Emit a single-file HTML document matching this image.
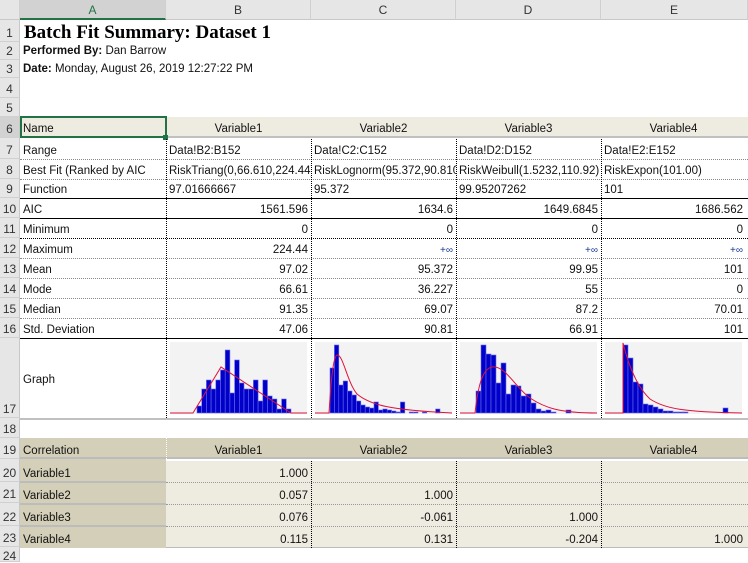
<!DOCTYPE html><html><head><style>
*{margin:0;padding:0;box-sizing:border-box}
body{width:748px;height:558px;overflow:hidden;background:#fff;font-family:"Liberation Sans",sans-serif;font-size:11.5px;color:#111;position:relative}
div{position:absolute}
.ch{top:0;height:20px;background:#e6e6e6;border-right:1px solid #d0d0d0;border-bottom:1px solid #c8c8c8;text-align:center;line-height:20px;font-size:12px;color:#333}
.rh{left:0;width:20px;background:#e6e6e6;border-bottom:1px solid #d0d0d0;border-right:1px solid #c8c8c8;text-align:center;font-size:12px;color:#333;display:flex;align-items:flex-end;justify-content:center;padding-bottom:1px}
.t{white-space:nowrap;overflow:hidden;padding:0 3px;display:flex;align-items:flex-end;padding-bottom:2px}
.r{justify-content:flex-end}
.m{justify-content:center}
.hl{height:0;border-top:1px dotted #888}
.vl{width:0;border-left:1px dotted #000}
.bl{height:0;border-top:1px solid #000}
</style></head><body>
<div class="ch" style="left:0;width:20px;background:#e6e6e6"></div>
<div class="ch" style="left:20px;width:146px;background:#d2d2d2;color:#217346;border-bottom:2px solid #217346">A</div>
<div class="ch" style="left:166px;width:145px">B</div>
<div class="ch" style="left:311px;width:145px">C</div>
<div class="ch" style="left:456px;width:145px">D</div>
<div class="ch" style="left:601px;width:147px">E</div>
<div class="rh" style="top:20px;height:22px">1</div>
<div class="rh" style="top:42px;height:18px">2</div>
<div class="rh" style="top:60px;height:18px">3</div>
<div class="rh" style="top:78px;height:20px">4</div>
<div class="rh" style="top:98px;height:19px">5</div>
<div class="rh" style="top:117px;height:21px;background:#d2d2d2">6</div>
<div class="rh" style="top:138px;height:21px">7</div>
<div class="rh" style="top:159px;height:20px">8</div>
<div class="rh" style="top:179px;height:19px">9</div>
<div class="rh" style="top:198px;height:20px">10</div>
<div class="rh" style="top:218px;height:20px">11</div>
<div class="rh" style="top:238px;height:20px">12</div>
<div class="rh" style="top:258px;height:20px">13</div>
<div class="rh" style="top:278px;height:20px">14</div>
<div class="rh" style="top:298px;height:20px">15</div>
<div class="rh" style="top:318px;height:20px">16</div>
<div class="rh" style="top:338px;height:80px">17</div>
<div class="rh" style="top:418px;height:20px">18</div>
<div class="rh" style="top:438px;height:21px">19</div>
<div class="rh" style="top:459px;height:23px">20</div>
<div class="rh" style="top:482px;height:21px">21</div>
<div class="rh" style="top:503px;height:23px">22</div>
<div class="rh" style="top:526px;height:21px">23</div>
<div class="rh" style="top:547px;height:15px;align-items:flex-start;padding-top:2px">24</div>

<div style="left:24px;top:21px;height:22px;line-height:24px;font-family:'Liberation Serif',serif;font-weight:bold;font-size:19px;color:#000;white-space:nowrap">Batch Fit Summary: Dataset 1</div>
<div style="left:23px;top:45px;font-size:11.5px;white-space:nowrap"><b>Performed By:</b> Dan Barrow</div>
<div style="left:23px;top:63px;font-size:11.5px;white-space:nowrap"><b>Date:</b> Monday, August 26, 2019 12:27:22 PM</div>

<div style="left:20px;top:117px;width:728px;height:21px;background:#eeece1;border-bottom:2px solid #c0c0c0"></div>
<div style="left:20px;top:116px;width:147px;height:22px;border:2px solid #217346"></div>
<div style="left:163px;top:135px;width:5px;height:5px;background:#217346"></div>
<div class="t" style="left:20px;top:117px;width:146px;height:20px">Name</div>
<div class="t m" style="left:166px;top:117px;width:145px;height:20px">Variable1</div>
<div class="t m" style="left:311px;top:117px;width:145px;height:20px">Variable2</div>
<div class="t m" style="left:456px;top:117px;width:145px;height:20px">Variable3</div>
<div class="t m" style="left:601px;top:117px;width:145px;height:20px">Variable4</div>

<div class="hl" style="left:20px;top:159px;width:728px"></div>
<div class="hl" style="left:20px;top:179px;width:728px"></div>
<div class="bl" style="left:20px;top:198px;width:728px"></div>
<div class="bl" style="left:20px;top:218px;width:728px"></div>
<div class="hl" style="left:20px;top:238px;width:728px;border-top-color:#000"></div>
<div class="hl" style="left:20px;top:258px;width:728px"></div>
<div class="hl" style="left:20px;top:278px;width:728px"></div>
<div class="hl" style="left:20px;top:298px;width:728px"></div>
<div class="hl" style="left:20px;top:318px;width:728px"></div>
<div class="bl" style="left:20px;top:338px;width:728px"></div>
<div style="left:20px;top:418px;width:728px;height:0;border-top:2px solid #c0c0c0"></div>
<div class="vl" style="left:166px;top:139px;height:279px"></div>
<div class="vl" style="left:311px;top:139px;height:279px"></div>
<div class="vl" style="left:456px;top:139px;height:279px"></div>
<div class="vl" style="left:601px;top:139px;height:279px"></div>

<div class="t" style="left:20px;top:139px;width:146px;height:20px">Range</div>
<div class="t" style="left:20px;top:159px;width:146px;height:20px">Best Fit (Ranked by AIC</div>
<div class="t" style="left:20px;top:179px;width:146px;height:19px">Function</div>
<div class="t" style="left:20px;top:198px;width:146px;height:20px">AIC</div>
<div class="t" style="left:20px;top:218px;width:146px;height:20px">Minimum</div>
<div class="t" style="left:20px;top:238px;width:146px;height:20px">Maximum</div>
<div class="t" style="left:20px;top:258px;width:146px;height:20px">Mean</div>
<div class="t" style="left:20px;top:278px;width:146px;height:20px">Mode</div>
<div class="t" style="left:20px;top:298px;width:146px;height:20px">Median</div>
<div class="t" style="left:20px;top:318px;width:146px;height:20px">Std. Deviation</div>
<div class="t" style="left:20px;top:338px;width:146px;height:50px">Graph</div>

<div class="t" style="left:166px;top:139px;width:145px;height:20px">Data!B2:B152</div>
<div class="t" style="left:166px;top:159px;width:145px;height:20px;padding-right:0">RiskTriang(0,66.610,224.44)</div>
<div class="t" style="left:166px;top:179px;width:145px;height:19px">97.01666667</div>
<div class="t r" style="left:166px;top:198px;width:145px;height:20px">1561.596</div>
<div class="t r" style="left:166px;top:218px;width:145px;height:20px">0</div>
<div class="t r" style="left:166px;top:238px;width:145px;height:20px">224.44</div>
<div class="t r" style="left:166px;top:258px;width:145px;height:20px">97.02</div>
<div class="t r" style="left:166px;top:278px;width:145px;height:20px">66.61</div>
<div class="t r" style="left:166px;top:298px;width:145px;height:20px">91.35</div>
<div class="t r" style="left:166px;top:318px;width:145px;height:20px">47.06</div>
<div class="t" style="left:311px;top:139px;width:145px;height:20px">Data!C2:C152</div>
<div class="t" style="left:311px;top:159px;width:145px;height:20px;padding-right:0">RiskLognorm(95.372,90.810)</div>
<div class="t" style="left:311px;top:179px;width:145px;height:19px">95.372</div>
<div class="t r" style="left:311px;top:198px;width:145px;height:20px">1634.6</div>
<div class="t r" style="left:311px;top:218px;width:145px;height:20px">0</div>
<div class="t r" style="left:311px;top:238px;width:145px;height:20px;color:#1a3a90;font-size:10px">+∞</div>
<div class="t r" style="left:311px;top:258px;width:145px;height:20px">95.372</div>
<div class="t r" style="left:311px;top:278px;width:145px;height:20px">36.227</div>
<div class="t r" style="left:311px;top:298px;width:145px;height:20px">69.07</div>
<div class="t r" style="left:311px;top:318px;width:145px;height:20px">90.81</div>
<div class="t" style="left:456px;top:139px;width:145px;height:20px">Data!D2:D152</div>
<div class="t" style="left:456px;top:159px;width:145px;height:20px;padding-right:0">RiskWeibull(1.5232,110.92)</div>
<div class="t" style="left:456px;top:179px;width:145px;height:19px">99.95207262</div>
<div class="t r" style="left:456px;top:198px;width:145px;height:20px">1649.6845</div>
<div class="t r" style="left:456px;top:218px;width:145px;height:20px">0</div>
<div class="t r" style="left:456px;top:238px;width:145px;height:20px;color:#1a3a90;font-size:10px">+∞</div>
<div class="t r" style="left:456px;top:258px;width:145px;height:20px">99.95</div>
<div class="t r" style="left:456px;top:278px;width:145px;height:20px">55</div>
<div class="t r" style="left:456px;top:298px;width:145px;height:20px">87.2</div>
<div class="t r" style="left:456px;top:318px;width:145px;height:20px">66.91</div>
<div class="t" style="left:601px;top:139px;width:145px;height:20px">Data!E2:E152</div>
<div class="t" style="left:601px;top:159px;width:145px;height:20px">RiskExpon(101.00)</div>
<div class="t" style="left:601px;top:179px;width:145px;height:19px">101</div>
<div class="t r" style="left:601px;top:198px;width:145px;height:20px">1686.562</div>
<div class="t r" style="left:601px;top:218px;width:145px;height:20px">0</div>
<div class="t r" style="left:601px;top:238px;width:145px;height:20px;color:#1a3a90;font-size:10px">+∞</div>
<div class="t r" style="left:601px;top:258px;width:145px;height:20px">101</div>
<div class="t r" style="left:601px;top:278px;width:145px;height:20px">0</div>
<div class="t r" style="left:601px;top:298px;width:145px;height:20px">70.01</div>
<div class="t r" style="left:601px;top:318px;width:145px;height:20px">101</div>

<svg style="position:absolute;left:170px;top:342px" width="137" height="72" viewBox="0 0 137 72">
<rect width="137" height="72" fill="#f3f3f3"/>
<g fill="#0000c8" stroke="#6a6af0" stroke-width="0.6">
<rect x="27" y="64" width="4.7" height="7"/><rect x="31.7" y="47" width="4.7" height="24"/><rect x="36.4" y="38" width="4.7" height="33"/><rect x="41.1" y="47" width="4.7" height="24"/><rect x="45.8" y="38" width="4.7" height="33"/><rect x="50.5" y="28" width="4.7" height="43"/><rect x="55.2" y="8" width="4.7" height="63"/><rect x="59.9" y="51" width="4.7" height="20"/><rect x="64.6" y="18" width="4.7" height="53"/><rect x="69.3" y="41" width="4.7" height="30"/><rect x="74" y="47" width="4.7" height="24"/><rect x="78.7" y="47" width="4.7" height="24"/><rect x="83.4" y="38" width="4.7" height="33"/><rect x="88.1" y="59" width="4.7" height="12"/><rect x="92.8" y="38" width="4.7" height="33"/><rect x="97.5" y="54" width="4.7" height="17"/><rect x="102.2" y="57" width="4.7" height="14"/><rect x="106.9" y="67" width="4.7" height="4"/><rect x="111.6" y="57" width="4.7" height="14"/><rect x="116.3" y="67" width="4.7" height="4"/>
</g>
<polyline points="0,71 23,71 51,25 121,71 137,71" fill="none" stroke="#e0103a" stroke-width="1"/>
</svg>
<svg style="position:absolute;left:315px;top:342px" width="137" height="72" viewBox="0 0 137 72">
<rect width="137" height="72" fill="#f3f3f3"/>
<g fill="#0000c8" stroke="#6a6af0" stroke-width="0.6">
<rect x="15" y="26" width="4.4" height="45"/><rect x="19.4" y="3" width="4.4" height="68"/><rect x="23.8" y="43" width="4.4" height="28"/><rect x="28.2" y="39" width="4.4" height="32"/><rect x="32.6" y="49" width="4.4" height="22"/><rect x="37" y="53" width="4.4" height="18"/><rect x="41.4" y="59" width="4.4" height="12"/><rect x="45.8" y="63" width="4.4" height="8"/><rect x="50.2" y="65" width="4.4" height="6"/><rect x="54.6" y="66" width="4.4" height="5"/><rect x="59" y="60" width="4.4" height="11"/><rect x="63.4" y="68" width="4.4" height="3"/><rect x="67.8" y="67" width="4.4" height="4"/><rect x="72.2" y="68" width="4.4" height="3"/><rect x="76.6" y="69" width="4.4" height="2"/><rect x="81" y="70" width="4.4" height="1"/><rect x="85.4" y="60" width="4.4" height="11"/><rect x="94.2" y="70" width="4.4" height="1"/><rect x="98.6" y="70" width="4.4" height="1"/><rect x="107.4" y="70" width="4.4" height="1"/><rect x="120.6" y="67" width="4.4" height="4"/>
</g>
<path d="M0 71 L14 71 C16 40 18 15 22 13 C28 12 32 40 42 52 C55 63 75 68 137 71" fill="none" stroke="#e0103a" stroke-width="1"/>
</svg>
<svg style="position:absolute;left:460px;top:342px" width="137" height="72" viewBox="0 0 137 72">
<rect width="137" height="72" fill="#f3f3f3"/>
<g fill="#0000c8" stroke="#6a6af0" stroke-width="0.6">
<rect x="16" y="49" width="5" height="22"/><rect x="21" y="3" width="5" height="68"/><rect x="26" y="12" width="5" height="59"/><rect x="31" y="13" width="5" height="58"/><rect x="36" y="41" width="5" height="30"/><rect x="41" y="21" width="5" height="50"/><rect x="46" y="52" width="5" height="19"/><rect x="51" y="43" width="5" height="28"/><rect x="56" y="44" width="5" height="27"/><rect x="61" y="54" width="5" height="17"/><rect x="66" y="52" width="5" height="19"/><rect x="71" y="61" width="5" height="10"/><rect x="76" y="67" width="5" height="4"/><rect x="81" y="69" width="5" height="2"/><rect x="86" y="68" width="5" height="3"/><rect x="91" y="70" width="5" height="1"/><rect x="106" y="68" width="5" height="3"/>
</g>
<path d="M0 71 L15 71 C18 45 22 27 32 25 C45 23 55 45 70 56 C85 66 100 71 137 71" fill="none" stroke="#e0103a" stroke-width="1"/>
</svg>
<svg style="position:absolute;left:605px;top:342px" width="137" height="72" viewBox="0 0 137 72">
<rect width="137" height="72" fill="#f3f3f3"/>
<g fill="#0000c8" stroke="#6a6af0" stroke-width="0.6">
<rect x="18" y="3" width="5" height="68"/><rect x="23" y="16" width="5" height="55"/><rect x="28" y="40" width="5" height="31"/><rect x="33" y="42" width="5" height="29"/><rect x="38" y="62" width="5" height="9"/><rect x="43" y="63" width="5" height="8"/><rect x="48" y="65" width="5" height="6"/><rect x="53" y="67" width="5" height="4"/><rect x="58" y="69" width="5" height="2"/><rect x="63" y="69" width="5" height="2"/><rect x="68" y="70" width="5" height="1"/><rect x="73" y="70" width="5" height="1"/><rect x="78" y="70" width="5" height="1"/><rect x="118" y="66" width="5" height="5"/>
</g>
<path d="M0 71 L18 71 L18 1 C24 25 32 45 45 57 C60 67 80 70 137 71" fill="none" stroke="#e0103a" stroke-width="1"/>
</svg>

<div style="left:20px;top:438px;width:728px;height:21px;background:#d4cfb8;border-bottom:2px solid #bcbcbc"></div>
<div style="left:20px;top:459px;width:146px;height:89px;background:#d4cfb8"></div>
<div style="left:166px;top:461px;width:582px;height:87px;background:#eeebe0;border-bottom:1px solid #bcbcbc"></div>
<div style="left:20px;top:481px;width:146px;height:0;border-top:2px solid #bcbcbc"></div>
<div style="left:20px;top:503px;width:146px;height:0;border-top:2px solid #bcbcbc"></div>
<div style="left:20px;top:525px;width:146px;height:0;border-top:2px solid #bcbcbc"></div>
<div class="hl" style="left:166px;top:482px;width:582px;border-top-color:#999"></div>
<div class="hl" style="left:166px;top:504px;width:582px;border-top-color:#999"></div>
<div class="hl" style="left:166px;top:526px;width:582px;border-top-color:#999"></div>
<div class="vl" style="left:166px;top:438px;height:21px;border-left-color:#fff"></div>
<div class="vl" style="left:311px;top:461px;height:87px"></div>
<div class="vl" style="left:456px;top:461px;height:87px"></div>
<div class="vl" style="left:601px;top:461px;height:87px"></div>
<div class="t" style="left:20px;top:438px;width:146px;height:21px">Correlation</div>
<div class="t m" style="left:166px;top:438px;width:145px;height:21px">Variable1</div>
<div class="t m" style="left:311px;top:438px;width:145px;height:21px">Variable2</div>
<div class="t m" style="left:456px;top:438px;width:145px;height:21px">Variable3</div>
<div class="t m" style="left:601px;top:438px;width:145px;height:21px">Variable4</div>
<div class="t" style="left:20px;top:461px;width:146px;height:21px">Variable1</div>
<div class="t" style="left:20px;top:483px;width:146px;height:21px">Variable2</div>
<div class="t" style="left:20px;top:505px;width:146px;height:21px">Variable3</div>
<div class="t" style="left:20px;top:527px;width:146px;height:21px">Variable4</div>
<div class="t r" style="left:166px;top:461px;width:145px;height:21px">1.000</div>
<div class="t r" style="left:166px;top:483px;width:145px;height:21px">0.057</div>
<div class="t r" style="left:311px;top:483px;width:145px;height:21px">1.000</div>
<div class="t r" style="left:166px;top:505px;width:145px;height:21px">0.076</div>
<div class="t r" style="left:311px;top:505px;width:145px;height:21px">-0.061</div>
<div class="t r" style="left:456px;top:505px;width:145px;height:21px">1.000</div>
<div class="t r" style="left:166px;top:527px;width:145px;height:21px">0.115</div>
<div class="t r" style="left:311px;top:527px;width:145px;height:21px">0.131</div>
<div class="t r" style="left:456px;top:527px;width:145px;height:21px">-0.204</div>
<div class="t r" style="left:601px;top:527px;width:145px;height:21px">1.000</div>
</body></html>
